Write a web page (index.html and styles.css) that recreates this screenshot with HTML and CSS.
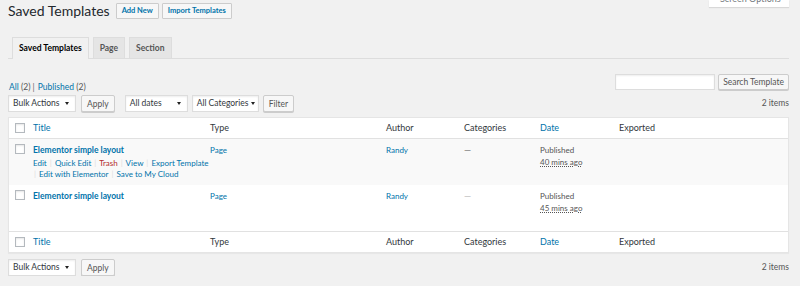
FILE: index.html
```html
<!DOCTYPE html>
<html lang="en">
<head>
    <meta charset="UTF-8">
    <meta name="viewport" content="width=device-width, initial-scale=1.0">
    <title>Saved Templates</title>
    <link rel="stylesheet" href="styles.css">
</head>
<body>
    <div class="screen-options"><span>Screen Options</span></div>

    <div class="wrap">
        <div class="page-head">
            <h1>Saved Templates</h1>
            <a class="page-title-action" href="#">Add New</a>
            <a class="page-title-action" href="#">Import Templates</a>
        </div>

        <nav class="nav-tabs">
            <a class="nav-tab active" href="#">Saved Templates</a>
            <a class="nav-tab" href="#">Page</a>
            <a class="nav-tab" href="#">Section</a>
        </nav>

        <div class="views-row">
            <ul class="subsubsub">
                <li><a href="#" class="current">All <span class="count">(2)</span></a> |</li>
                <li><a href="#">Published <span class="count">(2)</span></a></li>
            </ul>
            <div class="search-box">
                <input type="search" class="search-input">
                <button class="button">Search Template</button>
            </div>
        </div>

        <div class="tablenav">
            <div class="actions">
                <span class="select w-bulk">Bulk Actions</span>
                <button class="button">Apply</button>
            </div>
            <div class="actions filters">
                <span class="select w-dates">All dates</span>
                <span class="select w-cats">All Categories</span>
                <button class="button">Filter</button>
            </div>
            <div class="displaying-num">2 items</div>
        </div>

        <table class="list-table">
            <colgroup>
                <col class="c-cb">
                <col class="c-title">
                <col class="c-type">
                <col class="c-author">
                <col class="c-cats">
                <col class="c-date">
                <col>
            </colgroup>
            <thead>
                <tr>
                    <td class="check"><span class="cb"></span></td>
                    <th><a href="#">Title</a></th>
                    <th>Type</th>
                    <th>Author</th>
                    <th>Categories</th>
                    <th><a href="#">Date</a></th>
                    <th>Exported</th>
                </tr>
            </thead>
            <tbody>
                <tr class="alt">
                    <td class="check"><span class="cb"></span></td>
                    <td>
                        <a class="row-title" href="#">Elementor simple layout</a>
                        <div class="row-actions">
                            <a href="#">Edit</a> <i>|</i> <a href="#">Quick Edit</a> <i>|</i> <a class="trash" href="#">Trash</a> <i>|</i> <a href="#">View</a> <i>|</i> <a href="#">Export Template</a>
                            <br><i>|</i> <a href="#">Edit with Elementor</a> <i>|</i> <a href="#">Save to My Cloud</a>
                        </div>
                    </td>
                    <td><a class="small-link" href="#">Page</a></td>
                    <td><a class="small-link" href="#">Randy</a></td>
                    <td class="dash">—</td>
                    <td class="date">Published<br><abbr>40 mins ago</abbr></td>
                    <td></td>
                </tr>
                <tr>
                    <td class="check"><span class="cb"></span></td>
                    <td>
                        <a class="row-title" href="#">Elementor simple layout</a>
                        <div class="row-actions hidden">
                            <a href="#">Edit</a> <i>|</i> <a href="#">Quick Edit</a> <i>|</i> <a class="trash" href="#">Trash</a> <i>|</i> <a href="#">View</a> <i>|</i> <a href="#">Export Template</a>
                            <br><i>|</i> <a href="#">Edit with Elementor</a> <i>|</i> <a href="#">Save to My Cloud</a>
                        </div>
                    </td>
                    <td><a class="small-link" href="#">Page</a></td>
                    <td><a class="small-link" href="#">Randy</a></td>
                    <td class="dash light">—</td>
                    <td class="date">Published<br><abbr>45 mins ago</abbr></td>
                    <td></td>
                </tr>
            </tbody>
            <tfoot>
                <tr>
                    <td class="check"><span class="cb"></span></td>
                    <th><a href="#">Title</a></th>
                    <th>Type</th>
                    <th>Author</th>
                    <th>Categories</th>
                    <th><a href="#">Date</a></th>
                    <th>Exported</th>
                </tr>
            </tfoot>
        </table>

        <div class="tablenav bottom">
            <div class="actions">
                <span class="select w-bulk">Bulk Actions</span>
                <button class="button">Apply</button>
            </div>
            <div class="displaying-num">2 items</div>
        </div>
    </div>
</body>
</html>
```

FILE: styles.css
```css
body {
    margin: 0;
    background: #f1f1f1;
    color: #444;
    font-family: Lato, "Open Sans", sans-serif;
    font-size: 9px;
    line-height: 1.4;
}
a {
    color: #0073aa;
    text-decoration: none;
}
.wrap {
    padding: 0 11px 0 8px;
}
.screen-options {
    position: absolute;
    top: 0;
    right: 11px;
    width: 80px;
    height: 7px;
    overflow: hidden;
    background: #fff;
    box-shadow: 0 1px 1px rgba(0, 0, 0, .1);
    color: #72777c;
    font-size: 9px;
    line-height: 1px;
}
.screen-options span {
    display: block;
    margin-top: -2px;
    padding-left: 11px;
}
.page-head {
    display: flex;
    align-items: center;
    gap: 3px;
    padding-top: 3px;
    height: 16px;
}
.page-head h1 {
    margin: 0 3px 0 0;
    font-size: 14px;
    font-weight: 400;
    color: #23282d;
    line-height: 16px;
}
.page-title-action {
    display: inline-block;
    height: 14px;
    line-height: 14px;
    padding: 0 5px;
    border: 1px solid #ccc;
    background: #f7f7f7;
    font-size: 7.5px;
    font-weight: 700;
    border-radius: 1px;
}
.nav-tabs {
    display: flex;
    gap: 4px;
    margin-top: 18px;
    padding-left: 4px;
    border-bottom: 1px solid #ddd;
}
.nav-tab {
    display: block;
    height: 20px;
    line-height: 20px;
    padding: 0 6px;
    margin-bottom: -1px;
    border: 1px solid #ddd;
    border-bottom: none;
    background: #e5e5e5;
    color: #555;
    font-size: 8.5px;
    font-weight: 700;
}
.nav-tab.active {
    background: #f1f1f1;
    color: #000;
    height: 21px;
}
.views-row {
    display: flex;
    justify-content: space-between;
    align-items: flex-end;
    margin-top: 15px;
}
.subsubsub {
    list-style: none;
    margin: 0 0 -3px;
    padding: 0 0 0 1px;
    display: flex;
    gap: 3px;
    color: #666;
    font-size: 8.5px;
    line-height: 12px;
}
.subsubsub .count {
    color: #555;
}
.search-box {
    display: flex;
    gap: 3px;
}
.search-input {
    box-sizing: border-box;
    width: 100px;
    height: 16px;
    margin: 0;
    border: 1px solid #ddd;
    box-shadow: inset 0 1px 2px rgba(0, 0, 0, .07);
    background: #fff;
}
.search-box .button {
    padding: 0 4px;
}
.button {
    box-sizing: border-box;
    height: 16px;
    margin: 0;
    padding: 0 5px;
    border: 1px solid #ccc;
    border-radius: 2px;
    background: #f7f7f7;
    box-shadow: 0 1px 0 #ccc;
    color: #555;
    font-family: inherit;
    font-size: 8.5px;
    line-height: 14px;
}
.tablenav {
    display: flex;
    align-items: center;
    margin-top: 5px;
    height: 17px;
}
.tablenav.bottom {
    margin-top: 6px;
}
.actions {
    display: flex;
    gap: 5px;
    align-items: center;
}
.actions.filters {
    gap: 4px;
    margin-left: 10px;
}
.actions .button {
    height: 17px;
}
.select {
    position: relative;
    box-sizing: border-box;
    display: block;
    height: 17px;
    line-height: 15px;
    padding-left: 4px;
    border: 1px solid #ddd;
    background: #fff;
    box-shadow: inset 0 1px 2px rgba(0, 0, 0, .07);
    color: #32373c;
    font-size: 8.5px;
    white-space: nowrap;
}
.select::after {
    content: "";
    position: absolute;
    right: 6px;
    top: 6px;
    border-left: 2px solid transparent;
    border-right: 2px solid transparent;
    border-top: 3px solid #222;
}
.w-bulk { width: 68px; }
.w-dates { width: 63px; }
.w-cats { width: 67px; }
.w-cats::after { right: 3px; }
.displaying-num {
    margin-left: auto;
    color: #555;
    font-size: 8.5px;
}
.list-table {
    width: 100%;
    margin-top: 5px;
    border-spacing: 0;
    border: 1px solid #e5e5e5;
    box-shadow: 0 1px 1px rgba(0, 0, 0, .04);
    background: #fff;
    table-layout: fixed;
}
.c-cb { width: 20px; }
.c-title { width: 177px; }
.c-type { width: 176px; }
.c-author { width: 78px; }
.c-cats { width: 76px; }
.c-date { width: 79px; }
.list-table th,
.list-table td {
    padding: 5px 4px;
    text-align: left;
    vertical-align: top;
    line-height: 12px;
}
.list-table thead th,
.list-table thead td,
.list-table tfoot th,
.list-table tfoot td {
    height: 12px;
    padding: 4px 4px 4px;
    font-weight: 400;
    color: #32373c;
    font-size: 9px;
}
.list-table thead th,
.list-table thead td {
    border-bottom: 1px solid #e1e1e1;
}
.list-table tfoot th,
.list-table tfoot td {
    border-top: 1px solid #e1e1e1;
}
.list-table .check {
    padding-left: 6px;
    padding-right: 0;
}
.cb {
    display: block;
    box-sizing: border-box;
    width: 10px;
    height: 10px;
    margin-top: 1px;
    border: 1px solid #b4b9be;
    background: #fff;
    box-shadow: inset 0 1px 2px rgba(0, 0, 0, .1);
}
tbody .cb {
    margin-top: 0;
}
tr.alt td {
    background: #f9f9f9;
}
.row-title {
    font-weight: 700;
    font-size: 8.5px;
}
.row-actions {
    margin-top: 2px;
    color: #ddd;
    font-size: 8px;
    line-height: 11px;
    white-space: nowrap;
}
.row-actions i {
    font-style: normal;
    margin: 0 1px;
}
.row-actions.hidden {
    visibility: hidden;
}
.row-actions .trash {
    color: #b32d2e;
}
.small-link {
    font-size: 8px;
}
.dash {
    color: #777;
}
.dash.light {
    color: #bbb;
}
.date {
    color: #555;
    font-size: 8px;
}
.date abbr {
    text-decoration: underline dotted;
}
```
